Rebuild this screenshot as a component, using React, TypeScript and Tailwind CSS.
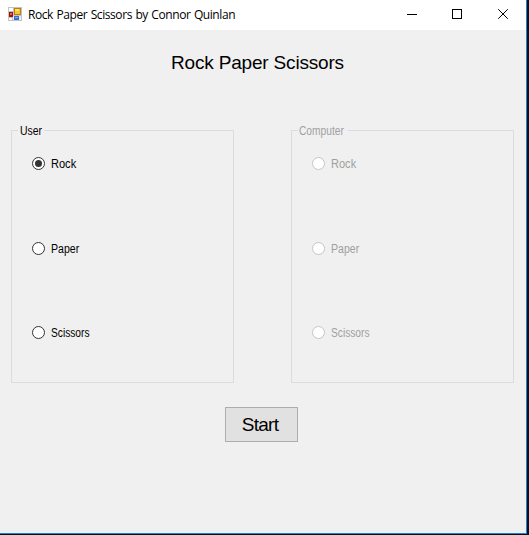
type Choice = { label: string; gap: string; fit: string };

const choices: Choice[] = [
  { label: "Rock", gap: "mt-[26px]", fit: "scale-x-[0.92]" },
  { label: "Paper", gap: "mt-[72px]", fit: "scale-x-[0.88]" },
  { label: "Scissors", gap: "mt-[71px]", fit: "scale-x-[0.85]" },
];

function AppIcon() {
  return (
    <svg width="14" height="14" viewBox="0 0 14 14" shapeRendering="crispEdges">
      <rect width="14" height="14" fill="#c3c3c3" />
      <rect x="1" y="1" width="4" height="3" fill="#fff" />
      <rect x="1" y="11" width="3" height="2" fill="#fff" />
      <rect x="5" y="9" width="8" height="4" fill="#e8eefb" />
      <rect x="1" y="5" width="4" height="5" fill="#a80f0c" />
      <rect x="2" y="6" width="2" height="2" fill="#d9685c" />
      <rect x="6" y="1" width="7" height="7" fill="#b98205" />
      <rect x="7" y="2" width="5" height="5" fill="#f6c62f" />
      <rect x="7" y="2" width="4" height="2" fill="#fce07a" />
      <rect x="6" y="9" width="5" height="4" fill="#376fd3" />
      <rect x="7" y="10" width="3" height="1" fill="#82aef5" />
    </svg>
  );
}

function TitleBar() {
  return (
    <header className="flex h-[30px] bg-white">
      <div className="flex flex-1 pl-2">
        <div className="pt-[7px]">
          <AppIcon />
        </div>
        <span className="ml-1.5 pt-[7px] font-['Open_Sans','Noto_Sans',sans-serif] text-[12px] leading-4 tracking-[-0.42px] [word-spacing:0.75px] whitespace-nowrap text-black">
          Rock Paper Scissors by Connor Quinlan
        </span>
      </div>
      <svg width="105" height="30" viewBox="0 0 105 30" fill="none" stroke="#000" className="mr-[15px]">
        <path d="M1 14.5h10" />
        <rect x="46.5" y="9.5" width="9" height="9" />
        <path d="M92.2 9.2l9.6 9.6M101.8 9.2l-9.6 9.6" />
      </svg>
    </header>
  );
}

function Radio({ checked, disabled }: { checked: boolean; disabled: boolean }) {
  return (
    <svg width="13" height="13" viewBox="0 0 13 13">
      <circle cx="6.5" cy="6.5" r="6" fill="#fff" stroke={disabled ? "#c4c4c4" : "#333"} />
      {checked && <circle cx="6.5" cy="6.5" r="3.5" fill="#333" />}
    </svg>
  );
}

function Group({ title, disabled = false }: { title: string; disabled?: boolean }) {
  return (
    <section
      className={`flex h-[253px] w-[223px] flex-col border border-[#dcdcdc] text-[12px] ${disabled ? "text-[#a0a0a0]" : "text-black"}`}
    >
      <h2 className="-mt-[7px] ml-1.5 flex h-[14px]">
        <span className={`bg-[#f0f0f0] leading-[14px] ${disabled ? "w-[50px] pl-px" : "w-[26px] pl-0.5"}`}>
          <span className={`inline-block origin-left ${disabled ? "scale-x-[0.85]" : "scale-x-[0.87]"}`}>{title}</span>
        </span>
      </h2>
      <div className="-mt-[7px] pl-5">
        {choices.map((c, i) => (
          <label key={c.label} className={`flex h-[13px] items-center ${c.gap}`}>
            <Radio checked={!disabled && i === 0} disabled={disabled} />
            <span className={`ml-1.5 origin-left pt-0.5 leading-[13px] ${c.fit}`}>{c.label}</span>
          </label>
        ))}
      </div>
    </section>
  );
}

export default function App() {
  return (
    <div className="h-[535px] w-[529px] overflow-hidden bg-[#0b0f16] pr-[2px] pb-px font-['Liberation_Sans',Arial,sans-serif]">
      <div className="flex h-[534px] flex-col border-r border-b border-[#1883d7] bg-[#f0f0f0]">
        <TitleBar />
        <h1 className="mt-[22px] ml-[171px] text-[19px] leading-[22px] tracking-[-0.18px] whitespace-nowrap text-black">
          Rock Paper Scissors
        </h1>
        <main className="mt-[56px] flex gap-[57px] pl-[11px]">
          <Group title="User" />
          <Group title="Computer" disabled />
        </main>
        <button className="mt-6 ml-[225px] flex h-[35px] w-[73px] items-center justify-center border border-[#adadad] bg-[#e1e1e1] pr-[3px] text-[19px] leading-[22px] tracking-[-0.7px] text-black">
          Start
        </button>
      </div>
    </div>
  );
}
